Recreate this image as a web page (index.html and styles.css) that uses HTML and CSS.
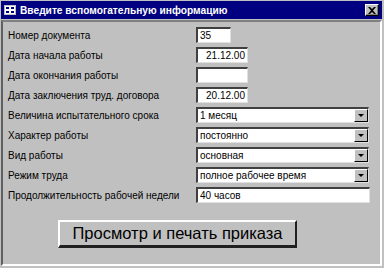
FILE: index.html
```html
<!DOCTYPE html>
<html lang="ru">
<head>
    <meta charset="UTF-8">
    <title>Введите вспомогательную информацию</title>
    <link rel="stylesheet" href="styles.css">
</head>
<body>

<div class="window">
    <div class="titlebar">
        <svg class="app-icon" width="12" height="10" viewBox="0 0 12 10">
            <rect x="0.5" y="0.5" width="11" height="9" fill="#fff" stroke="#c0c0c0"/>
            <rect x="2" y="2" width="3" height="2" fill="#000080"/>
            <rect x="7" y="2" width="3" height="2" fill="#000080"/>
            <rect x="2" y="6" width="3" height="2" fill="#000080"/>
            <rect x="7" y="6" width="3" height="2" fill="#000080"/>
        </svg>
        <span class="title">Введите вспомогательную информацию</span>
        <div class="close-btn">
            <svg width="8" height="7" viewBox="0 0 8 7">
                <path d="M0 0h2l2 2 2-2h2L5 3.5 8 7H6L4 5 2 7H0l3-3.5z" fill="#000"/>
            </svg>
        </div>
    </div>

    <div class="client">
        <div class="form">
            <div class="row">
                <label>Номер документа</label>
                <div class="field w-short">35</div>
            </div>
            <div class="row">
                <label>Дата начала работы</label>
                <div class="field w-date right">21.12.00</div>
            </div>
            <div class="row">
                <label>Дата окончания работы</label>
                <div class="field w-date right"></div>
            </div>
            <div class="row">
                <label>Дата заключения труд. договора</label>
                <div class="field w-date right">20.12.00</div>
            </div>
            <div class="row">
                <label>Величина испытательного срока</label>
                <div class="field combo"><span>1 месяц</span><span class="arrow"></span></div>
            </div>
            <div class="row">
                <label>Характер работы</label>
                <div class="field combo"><span>постоянно</span><span class="arrow"></span></div>
            </div>
            <div class="row">
                <label>Вид работы</label>
                <div class="field combo"><span>основная</span><span class="arrow"></span></div>
            </div>
            <div class="row">
                <label>Режим труда</label>
                <div class="field combo"><span>полное рабочее время</span><span class="arrow"></span></div>
            </div>
            <div class="row">
                <label>Продолжительность рабочей недели</label>
                <div class="field w-long">40 часов</div>
            </div>
        </div>

        <button class="print-btn">Просмотр и печать приказа</button>
    </div>
</div>

</body>
</html>
```

FILE: styles.css
```css
body {
    margin: 0;
    background-color: #c0c0c0;
    font-family: "Liberation Sans", Arial, sans-serif;
    font-size: 10px;
    color: #000;
    width: 384px;
    height: 268px;
    overflow: hidden;
}
.window {
    height: 268px;
    box-sizing: border-box;
    padding: 1px 2px 2px 1px;
    display: flex;
    flex-direction: column;
}
.titlebar {
    height: 18px;
    background-color: #000080;
    color: #fff;
    display: flex;
    align-items: center;
    padding: 0 3px 0 3px;
    gap: 4px;
}
.title {
    flex: 1;
    font-weight: bold;
    font-size: 10.2px;
}
.close-btn {
    width: 14px;
    height: 12px;
    box-sizing: border-box;
    background: #c0c0c0;
    border-top: 1px solid #fff;
    border-left: 1px solid #fff;
    border-right: 1px solid #000;
    border-bottom: 1px solid #000;
    box-shadow: inset -1px -1px 0 #808080;
    display: flex;
    align-items: center;
    justify-content: center;
}
.client {
    flex: 1;
    margin-top: 1px;
    border-top: 2px solid #808080;
    border-left: 2px solid #606060;
    border-right: 2px solid #fff;
    border-bottom: 2px solid #fff;
    padding: 5px 0 0 5px;
}
.row {
    display: flex;
    align-items: center;
    height: 16px;
    margin-bottom: 4px;
}
.row label {
    width: 188px;
    flex-shrink: 0;
    white-space: nowrap;
}
.field {
    height: 16px;
    box-sizing: border-box;
    background: #fff;
    border-top: 2px solid #404040;
    border-left: 2px solid #404040;
    border-right: 1px solid #e0e0e0;
    border-bottom: 1px solid #e0e0e0;
    padding: 0 2px;
    line-height: 13px;
    white-space: nowrap;
}
.w-short { width: 35px; }
.w-date { width: 52px; }
.w-long { width: 174px; }
.right { text-align: right; }
.combo {
    width: 173px;
    display: flex;
    align-items: center;
    justify-content: space-between;
    padding-right: 0;
}
.arrow {
    width: 14px;
    height: 13px;
    box-sizing: border-box;
    background: #c0c0c0;
    border-top: 1px solid #fff;
    border-left: 1px solid #fff;
    border-right: 1px solid #000;
    border-bottom: 1px solid #000;
    position: relative;
}
.arrow::after {
    content: "";
    position: absolute;
    left: 3px;
    top: 4px;
    border-left: 3px solid transparent;
    border-right: 3px solid transparent;
    border-top: 3px solid #000;
}
.print-btn {
    display: block;
    margin: 17px 0 0 50px;
    width: 239px;
    height: 28px;
    background: #c0c0c0;
    border-top: 2px solid #fff;
    border-left: 2px solid #fff;
    border-right: 2px solid #202020;
    border-bottom: 3px solid #202020;
    font-family: "Liberation Sans", Arial, sans-serif;
    font-size: 16.5px;
    color: #000;
    padding: 0;
}
```
